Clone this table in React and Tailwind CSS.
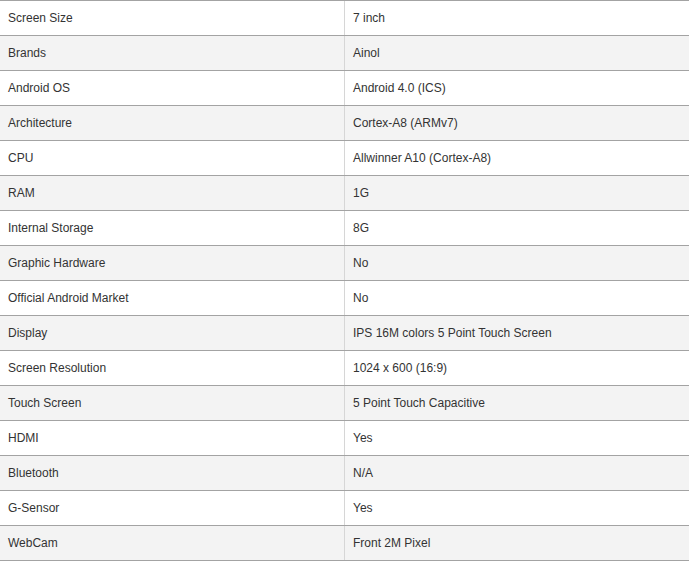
import React from 'react';

const specs = [
    ['Screen Size', '7 inch'],
    ['Brands', 'Ainol'],
    ['Android OS', 'Android 4.0 (ICS)'],
    ['Architecture', 'Cortex-A8 (ARMv7)'],
    ['CPU', 'Allwinner A10 (Cortex-A8)'],
    ['RAM', '1G'],
    ['Internal Storage', '8G'],
    ['Graphic Hardware', 'No'],
    ['Official Android Market', 'No'],
    ['Display', 'IPS 16M colors 5 Point Touch Screen'],
    ['Screen Resolution', '1024 x 600 (16:9)'],
    ['Touch Screen', '5 Point Touch Capacitive'],
    ['HDMI', 'Yes'],
    ['Bluetooth', 'N/A'],
    ['G-Sensor', 'Yes'],
    ['WebCam', 'Front 2M Pixel'],
];

const App = () => {
    return (
        <div className="bg-white min-h-screen font-['Liberation_Sans',Arial,sans-serif] text-[12px] text-[#333]">
            <div className="w-[689px] border-t border-[#a3a3a3]">
                {specs.map(([label, value], i) => (
                    <div
                        key={label}
                        className={`flex h-[35px] border-b border-[#a3a3a3] ${i % 2 === 1 ? 'bg-[#f3f3f3]' : 'bg-white'}`}
                    >
                        <div className="w-[344px] pl-2 flex items-center">{label}</div>
                        <div className="flex-1 pl-2 flex items-center border-l border-[#d6d6d6]">{value}</div>
                    </div>
                ))}
            </div>
        </div>
    );
};

export default App;
